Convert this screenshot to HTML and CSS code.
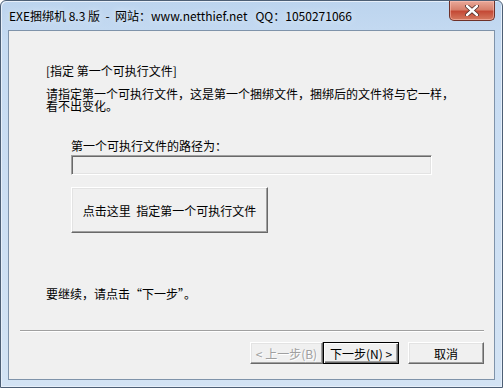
FILE: index.html
```html
<!DOCTYPE html>
<html lang="zh-CN">
<head>
    <meta charset="UTF-8">
    <title>EXE捆绑机 8.3 版</title>
    <link rel="stylesheet" href="styles.css">
</head>
<body>

<div class="window">
    <div class="titlebar">
        <span class="title">EXE捆绑机 8.3 版  -  网站：www.netthief.net   QQ：1050271066</span>
        <div class="close">
            <svg width="14" height="11" viewBox="0 0 14 11">
                <path d="M2 1 L12 10 M12 1 L2 10" stroke="#4a2a26" stroke-width="4" stroke-linecap="round"/>
                <path d="M2 1 L12 10 M12 1 L2 10" stroke="#ffffff" stroke-width="2.4" stroke-linecap="round"/>
            </svg>
        </div>
    </div>

    <div class="client">
        <div class="content">
            <div class="heading">[指定 第一个可执行文件]</div>
            <p class="desc">请指定第一个可执行文件，这是第一个捆绑文件，捆绑后的文件将与它一样，<br>看不出变化。</p>

            <div class="path-box">
                <div class="path-label">第一个可执行文件的路径为：</div>
                <div class="path-input"></div>
                <button class="pick-btn">点击这里  指定第一个可执行文件</button>
            </div>

            <div class="hint">要继续，请点击“下一步”。</div>
        </div>

        <div class="separator"></div>

        <div class="actions">
            <button class="btn disabled">&lt; 上一步(B)</button>
            <button class="btn default">下一步(N) &gt;</button>
            <button class="btn cancel">取消</button>
        </div>
    </div>
</div>

</body>
</html>
```

FILE: styles.css
```css
body {
    margin: 0;
    background: #ffffff;
    font-family: "Noto Sans CJK SC", "Liberation Sans", sans-serif;
    font-size: 12px;
    color: #000;
}
.window {
    width: 503px;
    height: 388px;
    box-sizing: border-box;
    display: flex;
    flex-direction: column;
    border: 1px solid #4d5f75;
    border-radius: 6px 6px 0 0;
    background: linear-gradient(#bcd4ee, #c6dbf2 40px, #d3e3f4);
    box-shadow: inset 1px 1px 0 #e6effa, inset -1px -1px 0 #e6effa;
}
.titlebar {
    height: 29px;
    display: flex;
    justify-content: space-between;
    align-items: flex-start;
    padding-left: 8px;
    padding-right: 7px;
}
.title {
    white-space: pre;
    font-family: "Noto Sans CJK SC", sans-serif;
    font-size: 12px;
    line-height: 14px;
    margin-top: 8px;
    color: #000;
    text-shadow: 0 0 6px #e8f1fb;
}
.close {
    width: 46px;
    height: 20px;
    box-sizing: border-box;
    border: 1px solid #6e3129;
    border-top: none;
    border-radius: 0 0 5px 5px;
    background: linear-gradient(#e9a999, #d7806c 45%, #c44a36 55%, #d57a60);
    box-shadow: inset 0 0 0 1px rgba(255, 200, 190, 0.5);
    display: flex;
    justify-content: center;
    align-items: center;
}
.client {
    flex: 1;
    margin: 0 7px 7px;
    border: 1px solid #7f93aa;
    background: #f0f0f0;
    display: flex;
    flex-direction: column;
}
.content {
    padding: 33px 0 0 37px;
    height: 266px;
}
.heading {
    line-height: 14px;
}
.desc {
    margin: 10px 0 0;
    line-height: 12px;
}
.path-box {
    margin: 27px 0 0 25px;
}
.path-label {
    line-height: 14px;
}
.path-input {
    margin-top: 2px;
    width: 361px;
    height: 20px;
    box-sizing: border-box;
    border: 1px solid;
    border-color: #a0a0a0 #ffffff #ffffff #a0a0a0;
    box-shadow: inset 1px 1px 0 #696969, inset -1px -1px 0 #e3e3e3;
    background: #f0f0f0;
}
.pick-btn {
    display: block;
    margin-top: 12px;
    width: 197px;
    height: 46px;
    font-family: inherit;
    font-size: 12px;
    white-space: pre;
    background: #f0f0f0;
    border: 1px solid;
    border-color: #ffffff #696969 #696969 #ffffff;
    box-shadow: inset -1px -1px 0 #a0a0a0, inset 1px 1px 0 #e3e3e3;
    padding: 0;
    color: #000;
}
.hint {
    margin-top: 54px;
    line-height: 14px;
}
.separator {
    margin: 0 10px 0 11px;
    border-top: 1px solid #a0a0a0;
    border-bottom: 1px solid #ffffff;
}
.actions {
    display: flex;
    justify-content: flex-end;
    padding: 10px 10px 0 0;
}
.btn {
    height: 22px;
    font-family: inherit;
    font-size: 12px;
    background: #f0f0f0;
    border: 1px solid;
    border-color: #ffffff #696969 #696969 #ffffff;
    box-shadow: inset -1px -1px 0 #a0a0a0, inset 1px 1px 0 #e3e3e3;
    padding: 0;
    color: #000;
}
.btn.disabled {
    width: 73px;
    color: #a0a0a0;
    text-shadow: 1px 1px 0 #ffffff;
}
.btn.default {
    width: 76px;
    border: 1px solid #000;
    box-shadow: inset 1px 1px 0 #ffffff, inset -1px -1px 0 #696969, inset -2px -2px 0 #a0a0a0;
}
.btn.cancel {
    width: 76px;
    margin-left: 9px;
}
```
